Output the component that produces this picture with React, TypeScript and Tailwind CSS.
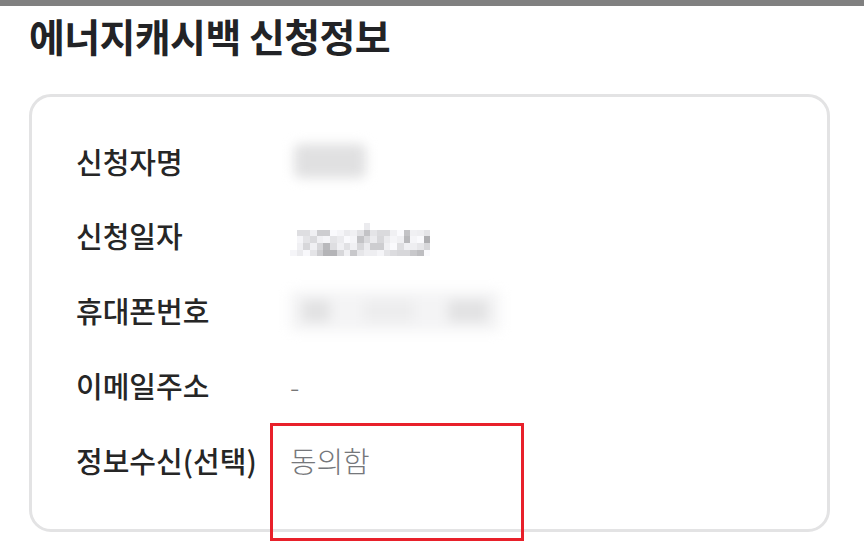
import React from "react";

const mosaic: number[][] = [
  [0, 0, 0, 0, 0, 0, 0, 0, 0, 0, 0, 0, 0, 0, 0, 0, 0, 0, 0, 0, 0, 0],
  [0, 0, 0, 0, 0, 0, 0, 0, 0, 0, 0, 235, 0, 0, 0, 0, 0, 0, 0, 0, 0, 0],
  [0, 222, 222, 240, 205, 205, 250, 245, 235, 240, 225, 195, 228, 218, 218, 240, 250, 195, 240, 238, 228, 0],
  [0, 245, 228, 218, 240, 245, 228, 235, 250, 245, 195, 218, 235, 215, 235, 245, 240, 185, 245, 250, 175, 0],
  [0, 240, 215, 240, 215, 185, 222, 240, 225, 240, 215, 235, 205, 205, 240, 250, 222, 240, 238, 230, 215, 0],
  [245, 235, 248, 228, 205, 180, 180, 215, 240, 200, 230, 238, 238, 245, 228, 220, 215, 215, 200, 190, 250, 0],
];

function Mosaic() {
  return (
    <div className="flex flex-col">
      {mosaic.map((row, i) => (
        <div key={i} className="flex">
          {row.map((v, j) => (
            <div
              key={j}
              className="h-[6.7px] w-[6.7px]"
              style={{ backgroundColor: v === 0 ? "transparent" : `rgb(${v},${v},${v + 3})` }}
            />
          ))}
        </div>
      ))}
    </div>
  );
}

function Row({ label, children }: { label: string; children: React.ReactNode }) {
  return (
    <div className="flex h-[74.8px] items-center">
      <div className="w-[214px] shrink-0 whitespace-nowrap text-[29px] font-medium tracking-[0px] text-[#262626]">{label}</div>
      <div className="flex items-center">{children}</div>
    </div>
  );
}

export default function App() {
  return (
    <div
      className="relative h-[559px] w-[864px] overflow-hidden bg-white"
      style={{ fontFamily: '"Noto Sans CJK KR", "Noto Sans", sans-serif' }}
    >
      <div className="h-[6px] w-full bg-[#808080]" />
      <div className="px-[29px]">
        <h1 className="mt-[4px] whitespace-nowrap text-[39px] font-bold leading-[50px] tracking-[-0.6px] text-[#222326]">
          에너지캐시백 신청정보
        </h1>
        <div className="mt-[34px] h-[438px] w-[801px] rounded-[22px] border-[3px] border-[#e3e3e4] px-[44px] pt-[27px]">
          <Row label="신청자명">
            <div className="h-[34px] w-[72px] translate-x-[4px] rounded-md bg-[#e0e0e1] blur-[6px]" />
          </Row>
          <Row label="신청일자">
            <Mosaic />
          </Row>
          <Row label="휴대폰번호">
            <div className="flex h-[40px] w-[210px] items-center justify-between rounded bg-[#f4f4f5] px-3 blur-[6px]">
              <div className="h-[22px] w-[28px] rounded bg-[#e2e2e3]" />
              <div className="h-[22px] w-[50px] rounded bg-[#ededee]" />
              <div className="h-[22px] w-[40px] rounded bg-[#e2e2e3]" />
            </div>
          </Row>
          <Row label="이메일주소">
            <span className="text-[28px] font-light text-[#777]">-</span>
          </Row>
          <Row label="정보수신(선택)">
            <span className="text-[29px] font-light tracking-[-0.2px] text-[#75777b]">동의함</span>
          </Row>
        </div>
      </div>
      <div className="absolute left-[270px] top-[423px] h-[118px] w-[254px] border-[3px] border-[#e8202a]" />
    </div>
  );
}
